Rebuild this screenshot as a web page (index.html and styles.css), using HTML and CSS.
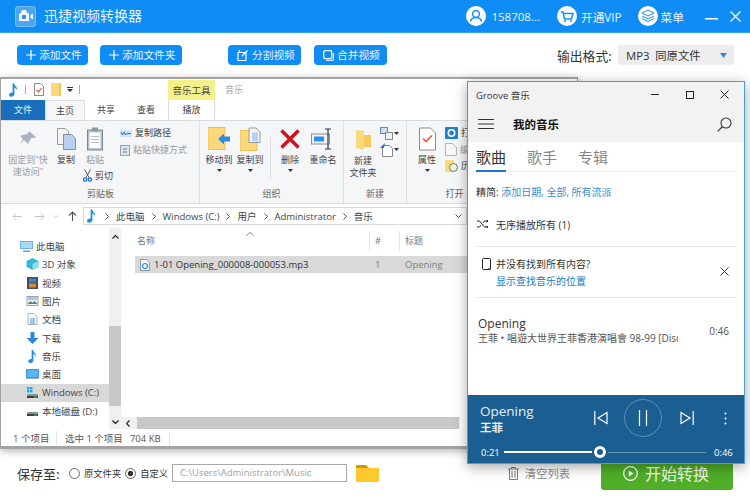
FILE: index.html
```html
<!DOCTYPE html>
<html lang="zh">
<head>
<meta charset="utf-8">
<title>迅捷视频转换器</title>
<link rel="stylesheet" href="styles.css">
</head>
<body>
<svg class="defs" width="0" height="0">
  <symbol id="note" viewBox="0 0 10 15"><path d="M4 0h1.600c.2 3 4.200 3.800 3.400 8-.4-2-1.800-3.200-3-3.400V12c0 1.800-1.700 3-3.500 3C1 15 0 14 0 12.800 0 11.200 1.800 10 4 10.300z" fill="#1d8fe8"/></symbol>
  <symbol id="chev" viewBox="0 0 4 7"><path d="M.5.500l3 3-3 3" fill="none" stroke="#555" stroke-width="1"/></symbol>
  <symbol id="drop" viewBox="0 0 5 3"><path d="M0 0h5L2.500 3z" fill="#333"/></symbol>
  <symbol id="drive" viewBox="0 0 13 12"><rect x="1" y="7" width="11" height="4" rx="1" fill="#8a8f92"/><rect x="1" y="9" width="11" height="2" fill="#3b3f42"/><rect x="8" y="9.500" width="3" height="1" fill="#54d15b"/></symbol>
</svg>

<div class="app">
  <header class="head">
    <div class="brand">
      <svg class="logo" width="21" height="21" viewBox="0 0 21 21"><rect width="21" height="21" rx="3" fill="#4aa6f1"/><rect x=".5" y=".5" width="20" height="20" rx="3" fill="none" stroke="#7cbff5"/><path d="M4 8l2-1 1-3h4l1 3h2v8H4z" fill="#fff"/><path d="M15.500 9l2.500-1.500v6L15.500 12z" fill="#eaf5fe"/><circle cx="9" cy="11" r="2.300" fill="#2f8fe0"/></svg>
      <span class="brand-name">迅捷视频转换器</span>
    </div>
    <div class="head-tools">
      <div class="head-item item-user">
        <svg width="20" height="20" viewBox="0 0 20 20"><circle cx="10" cy="10" r="10" fill="#fff"/><circle cx="10" cy="8" r="3.400" fill="none" stroke="#1b90f2" stroke-width="1.500"/><path d="M4.500 15.500c.6-3 3-4 5.500-4s4.900 1 5.500 4" fill="none" stroke="#1b90f2" stroke-width="1.500"/></svg>
        <span>158708...</span>
      </div>
      <div class="head-item">
        <svg width="20" height="20" viewBox="0 0 20 20"><circle cx="10" cy="10" r="10" fill="#fff"/><path d="M4 6h2l1.500 7h7L16 7.500H6.500" fill="none" stroke="#1b90f2" stroke-width="1.500"/><circle cx="8" cy="15" r="1" fill="#1b90f2"/><circle cx="14" cy="15" r="1" fill="#1b90f2"/></svg>
        <span>开通VIP</span>
      </div>
      <div class="head-item item-menu">
        <svg width="20" height="20" viewBox="0 0 20 20"><circle cx="10" cy="10" r="10" fill="#fff"/><path d="M10 4l6 3-6 3-6-3z" fill="none" stroke="#1b90f2"/><path d="M4 10l6 3 6-3M4 12.500l6 3 6-3" fill="none" stroke="#1b90f2"/></svg>
        <span>菜单</span>
      </div>
      <svg class="win-min" width="13" height="2" viewBox="0 0 13 2"><rect width="13" height="1.500" fill="#fff"/></svg>
      <svg class="win-close" width="11" height="11" viewBox="0 0 11 11"><path d="M.5.500l10 10M10.500.500l-10 10" stroke="#fff" stroke-width="1.300"/></svg>
    </div>
  </header>

  <div class="bar">
    <button class="btn btn-a"><svg width="10" height="10" viewBox="0 0 10 10"><path d="M5 0v10M0 5h10" stroke="#fff" stroke-width="1.200"/></svg>添加文件</button>
    <button class="btn btn-b"><svg width="10" height="10" viewBox="0 0 10 10"><path d="M5 0v10M0 5h10" stroke="#fff" stroke-width="1.200"/></svg>添加文件夹</button>
    <button class="btn btn-c"><svg width="11" height="11" viewBox="0 0 11 11"><path d="M1 2.500h8v8M1 2.500v8h8M2.500 0v2.500M10.500 .5L5 6" fill="none" stroke="#fff" stroke-width="1.200"/></svg>分割视频</button>
    <button class="btn btn-d"><svg width="11" height="11" viewBox="0 0 11 11"><rect x=".7" y=".7" width="8" height="8" rx="1.500" fill="none" stroke="#fff" stroke-width="1.300"/><path d="M10.300 3v7.300H3" fill="none" stroke="#fff"/></svg>合并视频</button>
    <label class="fmt-label">输出格式:</label>
    <div class="fmt"><span>MP3&nbsp; 同原文件</span><svg width="7" height="5" viewBox="0 0 7 5"><path d="M0 0h7L3.500 5z" fill="#1b90f2"/></svg></div>
  </div>

  <main class="desk">
    <section class="explorer">
      <div class="qat">
        <svg class="q-note" width="9" height="14"><use href="#note"/></svg>
        <i class="q-sep"></i>
        <svg class="q-doc" width="10" height="13" viewBox="0 0 10 13"><path d="M.5.500h6l3 3v9H.5z" fill="#fff" stroke="#8b8b8b"/><path d="M2.500 7l2 2 3-4" fill="none" stroke="#e8562a" stroke-width="1.200"/></svg>
        <svg class="q-folder" width="10" height="13" viewBox="0 0 10 13"><rect width="10" height="13" fill="#fbd87a"/><rect x="8" width="2" height="13" fill="#f2c45a"/></svg>
        <svg class="q-drop" width="6" height="5" viewBox="0 0 6 5"><path d="M0 0h6v1H0zM0 2h6L3 5z" fill="#333"/></svg>
        <i class="q-sep q-sep2"></i>
        <span class="ctx-tab">音乐工具</span>
        <span class="q-title">音乐</span>
      </div>
      <nav class="tabs">
        <span class="tab tab-file">文件</span>
        <span class="tab tab-on">主页</span>
        <span class="tab tab-share">共享</span>
        <span class="tab tab-view">查看</span>
        <span class="tab tab-play">播放</span>
      </nav>
      <div class="ribbon">
        <div class="group g1">
          <div class="group-body">
            <div class="big b-pin off">
              <svg width="18" height="18" viewBox="0 0 18 18"><path d="M10 1l7 6-2 1-3 0-2 4-1 2-4-4-4 5 3-6-3-3 3-1 4-1 2-2z" fill="#a9b4c4"/></svg>
              <span>固定到"快<br>速访问"</span>
            </div>
            <div class="big b-copy">
              <svg width="19" height="22" viewBox="0 0 19 22"><path d="M.5.500h8l3 3v13H.5z" fill="#f4f4f4" stroke="#9a9a9a"/><path d="M6.500 6.500h8l4 4v11h-12z" fill="#b8d0f2" stroke="#8a8f96"/></svg>
              <span>复制</span>
            </div>
            <div class="col-paste">
              <div class="big b-paste off">
                <svg width="16" height="23" viewBox="0 0 16 23"><rect x=".5" y="2.500" width="15" height="20" fill="#b9c3d0" stroke="#7d8794"/><rect x="2.500" y="5" width="11" height="15.500" fill="#fff"/><rect x="5" y="0" width="6" height="4" fill="#8d97a5"/><path d="M4 9h8M4 12h8M4 15h8" stroke="#bbb"/></svg>
                <span>粘贴</span>
              </div>
              <div class="mini cut">
                <svg width="9" height="13" viewBox="0 0 9 13"><path d="M1.500.500l4.500 8M7.500.500L3 8.500" stroke="#555" fill="none"/><circle cx="2.200" cy="10.500" r="1.700" fill="none" stroke="#1d6fc0" stroke-width="1.200"/><circle cx="6.800" cy="10.500" r="1.700" fill="none" stroke="#1d6fc0" stroke-width="1.200"/></svg>
                <span>剪切</span>
              </div>
            </div>
            <div class="col-small">
              <div class="mini">
                <svg width="12" height="7" viewBox="0 0 12 7"><rect width="12" height="7" fill="#cfe4f7"/><path d="M1 2l1.500 3L4 2l1.500 3L7 3.500h4" fill="none" stroke="#3a6ea5"/></svg>
                <span>复制路径</span>
              </div>
              <div class="mini off">
                <svg width="10" height="12" viewBox="0 0 10 12"><rect x=".5" y="1.500" width="9" height="10" fill="#dfe4ea" stroke="#97a2b0"/><path d="M3 5h4M3 8h4" stroke="#5e7fa8"/></svg>
                <span>粘贴快捷方式</span>
              </div>
            </div>
          </div>
          <div class="group-name">剪贴板</div>
        </div>

        <div class="group g2">
          <div class="group-body">
            <div class="big b-move">
              <svg width="22" height="23" viewBox="0 0 22 23"><rect y="0" width="17" height="22" fill="#fbd87a" stroke="#e9c25c"/><path d="M22 9h-6V6l-6 5.500 6 5.500v-3h6z" fill="#2a8fe0"/></svg>
              <span>移动到</span>
              <svg class="caret" width="5" height="3"><use href="#drop"/></svg>
            </div>
            <div class="big b-copyto">
              <svg width="21" height="23" viewBox="0 0 21 23"><rect y="3" width="17" height="20" fill="#fbd87a" stroke="#e9c25c"/><path d="M9 .500h7l4 4V15H9z" fill="#f4f4f4" stroke="#9a9a9a"/><rect x="12" y="5" width="6" height="9" fill="#b8d0f2"/></svg>
              <span>复制到</span>
              <svg class="caret" width="5" height="3"><use href="#drop"/></svg>
            </div>
            <i class="inner-sep"></i>
            <div class="big b-del">
              <svg width="20" height="20" viewBox="0 0 20 20"><path d="M1.500 1.500l17 17M18.500 1.500l-17 17" stroke="#d40f1c" stroke-width="3.400"/></svg>
              <span>删除</span>
              <svg class="caret" width="5" height="3"><use href="#drop"/></svg>
            </div>
            <div class="big b-ren">
              <svg width="24" height="21" viewBox="0 0 24 21"><rect x=".5" y="5.500" width="18" height="10" fill="#eef2f6" stroke="#8a9098"/><rect x="3" y="8" width="10" height="5" fill="#2a8fe0"/><path d="M14 .500h6M14 20.500h6M17 .500v20" stroke="#333" stroke-width="1.200" fill="none"/></svg>
              <span>重命名</span>
            </div>
          </div>
          <div class="group-name">组织</div>
        </div>

        <div class="group g3">
          <div class="group-body">
            <div class="big b-new">
              <svg width="15" height="20" viewBox="0 0 15 20"><path d="M0 0l8 1v4h7v12H8v3l-8-2z" fill="#fbd87a"/><path d="M8 5h7v12H8z" fill="#f6c95a"/></svg>
              <span>新建<br>文件夹</span>
            </div>
            <div class="col-icons">
              <div class="icon-row">
                <svg width="13" height="13" viewBox="0 0 13 13"><rect x=".5" y=".5" width="7" height="6" fill="#cfe0f5" stroke="#5b86b8"/><rect x="5.500" y="5.500" width="7" height="7" fill="#f2f2f2" stroke="#8a8a8a"/></svg>
                <svg width="5" height="3"><use href="#drop"/></svg>
              </div>
              <div class="icon-row">
                <svg width="13" height="14" viewBox="0 0 13 14"><path d="M2.500 2.500h7l3 3v8h-10z" fill="#fff" stroke="#8a8a8a"/><path d="M5 0L0 5h4z" fill="#2a78c8"/></svg>
                <svg width="5" height="3"><use href="#drop"/></svg>
              </div>
            </div>
          </div>
          <div class="group-name">新建</div>
        </div>

        <div class="group g4">
          <div class="group-body">
            <div class="big b-prop">
              <svg width="17" height="23" viewBox="0 0 17 23"><path d="M.5.500h11l5 5v17H.5z" fill="#fff" stroke="#8a8a8a"/><path d="M4 11l3 3 6-6" fill="none" stroke="#e8562a" stroke-width="1.600"/></svg>
              <span>属性</span>
              <svg class="caret" width="5" height="3"><use href="#drop"/></svg>
            </div>
            <div class="col-open">
              <div class="mini">
                <svg width="13" height="12" viewBox="0 0 13 12"><rect width="13" height="12" rx="1" fill="#1f7fd6"/><circle cx="6.500" cy="6" r="3.200" fill="none" stroke="#fff" stroke-width="1.600"/></svg>
                <span>打开</span>
              </div>
              <div class="mini off">
                <svg width="12" height="13" viewBox="0 0 12 13"><path d="M.5.500h7l4 4v8H.5z" fill="#f8f8f8" stroke="#aeb6c0"/></svg>
                <span>编辑</span>
              </div>
              <div class="mini">
                <svg width="13" height="12" viewBox="0 0 13 12"><rect width="9" height="12" fill="#fbd87a"/><circle cx="8.500" cy="7.500" r="4" fill="#eee" stroke="#5c8a3c"/></svg>
                <span>历史记录</span>
              </div>
            </div>
          </div>
          <div class="group-name">打开</div>
        </div>
      </div>

      <div class="navrow">
        <svg class="nav-back" width="10" height="9" viewBox="0 0 10 9"><path d="M10 4.500H1M4.500 1L1 4.500 4.500 8" fill="none" stroke="#c6c6c6"/></svg>
        <svg class="nav-fwd" width="10" height="9" viewBox="0 0 10 9"><path d="M0 4.500h9M5.500 1L9 4.500 5.500 8" fill="none" stroke="#c6c6c6"/></svg>
        <svg class="nav-dn" width="5" height="3" viewBox="0 0 5 3"><path d="M.3.300l2.200 2.200L4.700.300" fill="none" stroke="#c6c6c6"/></svg>
        <svg class="nav-up" width="9" height="10" viewBox="0 0 9 10"><path d="M4.500 10V1M1 4.500L4.500 1 8 4.500" fill="none" stroke="#555" stroke-width="1.100"/></svg>
        <div class="addr">
          <svg class="addr-note" width="9" height="14"><use href="#note"/></svg>
          <svg width="4" height="7"><use href="#chev"/></svg><span>此电脑</span>
          <svg width="4" height="7"><use href="#chev"/></svg><span>Windows (C:)</span>
          <svg width="4" height="7"><use href="#chev"/></svg><span>用户</span>
          <svg width="4" height="7"><use href="#chev"/></svg><span>Administrator</span>
          <svg width="4" height="7"><use href="#chev"/></svg><span>音乐</span>
          <svg class="addr-dn" width="7" height="4" viewBox="0 0 7 4"><path d="M.5.500l3 3 3-3" fill="none" stroke="#555"/></svg>
        </div>
      </div>

      <div class="panes">
        <ul class="tree">
          <li class="tree-pc"><svg width="13" height="11" viewBox="0 0 13 11"><rect width="13" height="8" fill="#64b5ee"/><rect x="1" y="1" width="11" height="6" fill="#a6d8f8"/><rect x="3" y="9.500" width="7" height="1.500" fill="#8a98a5"/></svg><span>此电脑</span></li>
          <li><svg width="12" height="12" viewBox="0 0 12 12"><path d="M6 0l6 3v6l-6 3-6-3V3z" fill="#35b8d6"/><path d="M6 6l6-3v6l-6 3z" fill="#8fe0ee"/></svg><span>3D 对象</span></li>
          <li><svg width="11" height="12" viewBox="0 0 11 12"><rect width="11" height="12" fill="#4b4b58"/><rect x="2" y="1.500" width="7" height="4" fill="#3c82c8"/><rect x="2" y="6.500" width="7" height="4" fill="#d88a2a"/></svg><span>视频</span></li>
          <li><svg width="12" height="10" viewBox="0 0 12 10"><rect x=".5" y=".5" width="11" height="9" fill="#eef3f7" stroke="#9aa4ae"/><path d="M1 8l3-3 2 2 2-2 3 3z" fill="#4e8a5c"/><rect x="1" y="1" width="10" height="3" fill="#a8c8e8"/></svg><span>图片</span></li>
          <li><svg width="10" height="12" viewBox="0 0 10 12"><path d="M.5.500h6l3 3v8H.5z" fill="#f7f9fb" stroke="#a6b0ba"/><path d="M2.500 6h5M2.500 8h5M2.500 10h5" stroke="#3f94dc"/></svg><span>文档</span></li>
          <li><svg width="12" height="12" viewBox="0 0 12 12"><path d="M4 0h4v6h4l-6 6-6-6h4z" fill="#2b88dc"/></svg><span>下载</span></li>
          <li><svg class="tree-note" width="9" height="13"><use href="#note"/></svg><span>音乐</span></li>
          <li><svg width="13" height="10" viewBox="0 0 13 10"><rect width="13" height="9" rx=".5" fill="#2f9ae8"/><rect x="1" y="1" width="11" height="7" fill="#5ab6f2"/><rect y="9" width="13" height="1" fill="#9ab"/></svg><span>桌面</span></li>
          <li class="tree-sel"><svg width="13" height="12"><use href="#drive"/><rect x="1" y="0" width="2.500" height="2.500" fill="#22a8e8"/><rect x="4" y="0" width="2.500" height="2.500" fill="#22a8e8"/><rect x="1" y="3" width="2.500" height="2.500" fill="#22a8e8"/><rect x="4" y="3" width="2.500" height="2.500" fill="#22a8e8"/></svg><span>Windows (C:)</span></li>
          <li><svg width="13" height="12"><use href="#drive"/></svg><span>本地磁盘 (D:)</span></li>
        </ul>
        <div class="vscroll">
          <svg class="arrow-up" width="7" height="4" viewBox="0 0 7 4"><path d="M.5 3.500l3-3 3 3" fill="none" stroke="#222" stroke-width="1.200"/></svg>
          <div class="vthumb"></div>
          <svg class="arrow-dn" width="7" height="4" viewBox="0 0 7 4"><path d="M.5.500l3 3 3-3" fill="none" stroke="#222" stroke-width="1.200"/></svg>
        </div>
        <div class="list">
          <div class="list-head">
            <div class="col col-name"><span>名称</span><svg class="sort" width="8" height="4" viewBox="0 0 8 4"><path d="M.5 3.500L4 .5l3.500 3" fill="none" stroke="#888"/></svg></div>
            <div class="col col-num">#</div>
            <div class="col col-title">标题</div>
          </div>
          <div class="file-row">
            <div class="cell-name"><svg width="10" height="12" viewBox="0 0 10 12"><path d="M.5.500h6l3 3v8H.5z" fill="#f4f8fc" stroke="#8a97a5"/><circle cx="5" cy="7" r="2.500" fill="none" stroke="#2a8fe0" stroke-width="1.200"/></svg><span>1-01 Opening_000008-000053.mp3</span></div>
            <div class="cell-num">1</div>
            <div class="cell-title">Opening</div>
          </div>
          <div class="hscroll">
            <svg width="4" height="7" viewBox="0 0 4 7"><path d="M3.500.500l-3 3 3 3" fill="none" stroke="#222" stroke-width="1.200"/></svg>
            <div class="hthumb"></div>
          </div>
        </div>
      </div>

      <div class="status">
        <span class="st-a">1 个项目</span>
        <span class="st-b">选中 1 个项目</span>
        <span class="st-c">704 KB</span>
      </div>
    </section>

    <section class="groove">
      <div class="g-top">
        <div class="g-title">
          <span class="g-app">Groove 音乐</span>
          <svg class="g-min" width="8" height="1" viewBox="0 0 8 1"><rect width="8" height="1" fill="#222"/></svg>
          <svg class="g-max" width="8" height="8" viewBox="0 0 8 8"><rect x=".5" y=".5" width="7" height="7" fill="none" stroke="#222"/></svg>
          <svg class="g-x" width="9" height="9" viewBox="0 0 9 9"><path d="M.5.500l8 8M8.500.500l-8 8" stroke="#222"/></svg>
        </div>
        <div class="g-head">
          <svg class="g-ham" width="16" height="10" viewBox="0 0 16 10"><path d="M0 .5h16M0 5h16M0 9.500h16" stroke="#333"/></svg>
          <span class="g-my">我的音乐</span>
          <svg class="g-search" width="15" height="15" viewBox="0 0 15 15"><circle cx="9" cy="6" r="5" fill="none" stroke="#333" stroke-width="1.100"/><path d="M5.500 9.500L.7 14.300" stroke="#333" stroke-width="1.200"/></svg>
        </div>
      </div>
      <div class="g-tabs">
        <span class="g-tab g-tab-on">歌曲</span>
        <span class="g-tab">歌手</span>
        <span class="g-tab">专辑</span>
      </div>
      <p class="g-filter"><span>精简:</span> <a>添加日期, 全部, 所有流派</a></p>
      <div class="g-shuffle">
        <svg width="11" height="8" viewBox="0 0 11 8"><path d="M0 1h2.500l5 6H11M0 7h2.500L4 5.200M6 2.800L7.500 1H11M9.500 0L11 1 9.500 2M9.500 6L11 7 9.500 8" fill="none" stroke="#222"/></svg>
        <span>无序播放所有 (1)</span>
      </div>
      <hr class="g-line g-line1">
      <div class="g-notice">
        <svg class="g-device" width="9" height="12" viewBox="0 0 9 12"><rect x=".5" y=".5" width="8" height="11" rx="1" fill="none" stroke="#222"/><path d="M6 11h3" stroke="#222"/></svg>
        <div class="g-notice-text">
          <div class="g-q">并没有找到所有内容?</div>
          <a class="g-link">显示查找音乐的位置</a>
        </div>
        <svg class="g-close" width="9" height="9" viewBox="0 0 9 9"><path d="M.5.500l8 8M8.500.500l-8 8" stroke="#333"/></svg>
      </div>
      <hr class="g-line g-line2">
      <div class="g-song">
        <div class="g-song-info">
          <div class="g-song-name">Opening</div>
          <div class="g-song-sub">王菲 • 唱遊大世界王菲香港演唱會 98-99 [Disc 1]</div>
        </div>
        <span class="g-song-time">0:46</span>
      </div>
      <div class="player">
        <div class="p-main">
          <div class="p-info">
            <div class="p-name">Opening</div>
            <div class="p-artist">王菲</div>
          </div>
          <svg class="p-prev" width="14" height="14" viewBox="0 0 14 14"><path d="M.8 0v14M13 1.500v11L4 7z" fill="none" stroke="#fff" stroke-width="1.200"/></svg>
          <div class="p-pause"><svg width="10" height="16" viewBox="0 0 10 16"><path d="M1.500 0v16M8.500 0v16" stroke="#fff" stroke-width="1.200"/></svg></div>
          <svg class="p-next" width="14" height="14" viewBox="0 0 14 14"><path d="M13.200 0v14M1 1.500v11L10 7z" fill="none" stroke="#fff" stroke-width="1.200"/></svg>
          <svg class="p-more" width="3" height="13" viewBox="0 0 3 13"><circle cx="1.500" cy="1.500" r="1" fill="#fff"/><circle cx="1.500" cy="6.500" r="1" fill="#fff"/><circle cx="1.500" cy="11.500" r="1" fill="#fff"/></svg>
        </div>
        <div class="p-progress">
          <span class="p-t1">0:21</span>
          <i class="p-fill"></i>
          <i class="p-knob"></i>
          <i class="p-rest"></i>
          <span class="p-t2">0:46</span>
        </div>
      </div>
    </section>
  </main>

  <footer class="foot">
    <span class="save-label">保存至:</span>
    <label class="radio"><i class="dot"></i>原文件夹</label>
    <label class="radio radio2"><i class="dot dot-on"></i>自定义</label>
    <div class="path-input">C:\Users\Administrator\Music</div>
    <svg class="folder" width="23" height="18" viewBox="0 0 23 18"><path d="M0 2a1 1 0 0 1 1-1h9l3 3H0z" fill="#c99a0e"/><rect y="4" width="23" height="14" fill="#fec92d"/></svg>
    <div class="clear">
      <svg width="11" height="13" viewBox="0 0 11 13"><path d="M0 2h11M3.500 2V.5h4V2M1.500 2v10.500h8V2M4 4v7M7 4v7" fill="none" stroke="#7a7a7a"/></svg>
      <span>清空列表</span>
    </div>
    <button class="start">
      <svg width="15" height="15" viewBox="0 0 15 15"><circle cx="7.500" cy="7.500" r="6.800" fill="none" stroke="#fff" stroke-width="1.200"/><path d="M5.800 4.500v6l4.700-3z" fill="#fff"/></svg>
      开始转换
    </button>
  </footer>
</div>
</body>
</html>
```

FILE: styles.css
```css
* { box-sizing: border-box; }
html, body { margin: 0; padding: 0; }
body {
  width: 750px; height: 497px; overflow: hidden; background: #fff;
  font-family: "Open Sans", "Noto Sans CJK SC", sans-serif; font-size: 9px; color: #444;
}
.defs { position: absolute; }
svg { display: block; flex: none; }
i { display: block; font-style: normal; }
.app { width: 750px; height: 497px; display: flex; flex-direction: column; }

/* header */
.head {
  height: 33px; flex: none; background: #108df4; border-bottom: 1px solid #37a2f7;
  display: flex; align-items: center; justify-content: space-between; color: #fff;
}
.brand { display: flex; align-items: center; margin-left: 15px; gap: 8px; }
.brand-name { font-size: 14px; line-height: 20px; color: #eaf5ff; }
.head-tools { display: flex; align-items: center; }
.head-item { display: flex; align-items: center; gap: 4px; font-size: 11.700px; margin-right: 16px; color: #e8f4ff; white-space: nowrap; }
.item-user { gap: 5px; margin-right: 17px; font-size: 11.500px; }
.item-menu { gap: 3px; margin-right: 21px; }
.win-min { margin-top: 6px; }
.win-close { margin: 0 9px 0 12px; }

/* toolbar */
.bar { height: 44px; flex: none; display: flex; align-items: center; padding: 0 16px 0 17px; }
.btn {
  height: 20px; border: 0; border-radius: 4px; background: #108df4; color: #e8f4ff;
  font: 10.700px/20px "Noto Sans CJK SC", sans-serif; display: flex; align-items: center; padding: 0; gap: 3px;
}
.btn-a { width: 71px; padding-left: 9px; }
.btn-b { width: 82px; padding-left: 9px; margin-left: 12px; }
.btn-c { width: 73px; padding-left: 9px; margin-left: 46px; gap: 4px; }
.btn-d { width: 73px; padding-left: 9px; margin-left: 13px; gap: 3px; }
.fmt-label { margin-left: 170px; width: 55px; font-size: 12.800px; color: #333; font-family: "Noto Sans CJK SC", sans-serif; white-space: nowrap; }
.fmt {
  width: 116px; height: 20px; margin-left: 6px; background: #ededed; padding: 0 7px 0 8px;
  display: flex; align-items: center; justify-content: space-between; font-size: 11.300px; color: #333;
}

/* free canvas with the two windows */
.desk { flex: none; height: 372px; position: relative; z-index: 2; }
.explorer {
  position: absolute; left: 0; top: 0; width: 578px; height: 372px; background: #fff;
  border-top: 2px solid #a3a3a3; border-left: 1px solid #a3a3a3; border-bottom: 3px solid #a3a3a3; border-right: 1px solid #a3a3a3;
  box-shadow: 0 2px 8px rgba(0,0,0,.3); display: flex; flex-direction: column; overflow: hidden;
}
.qat { height: 21px; flex: none; display: flex; align-items: center; }
.q-note { margin-left: 8px; }
.q-sep { width: 1px; height: 9px; background: #aaa; margin-left: 7px; }
.q-doc { margin-left: 8px; }
.q-folder { margin-left: 7px; }
.q-drop { margin-left: 6px; }
.q-sep2 { margin-left: 6px; }
.ctx-tab {
  margin-left: 88px; width: 47px; height: 20px; margin-top: 1px; background: #f4f08a; color: #444;
  text-align: center; line-height: 20px; font-size: 9.500px; font-family: "Noto Sans CJK SC", sans-serif;
}
.q-title { margin-left: 10px; color: #a6a6a6; font-size: 9px; }

.tabs { height: 20px; flex: none; display: flex; position: relative; z-index: 1; }
.tab { line-height: 19px; height: 20px; text-align: center; color: #444; font-size: 9px; }
.tab-file { width: 44px; background: #1a6fbd; color: #e4effa; }
.tab-on { width: 40px; background: #f5f6f7; border: 1px solid #dadbdc; border-bottom: 0; }
.tab-share { margin-left: 11px; width: 20px; }
.tab-view { margin-left: 20px; width: 20px; }
.tab-play { margin-left: 12px; width: 47px; border-left: 1px solid #dadbdc; border-right: 1px solid #dadbdc; }

.ribbon {
  height: 84px; flex: none; background: #f5f6f7; display: flex; padding-left: 1px;
  border-top: 1px solid #dadbdc; border-bottom: 1px solid #dadbdc;
}
.group { display: flex; flex-direction: column; border-right: 1px solid #dfe0e2; }
.g1 { width: 198px; }
.g2 { width: 144px; }
.g3 { width: 63px; }
.g4 { width: 96px; }
.group-body { height: 67px; display: flex; padding-top: 6px; position: relative; }
.group-name { height: 14px; line-height: 12px; text-align: center; color: #666; font-size: 9px; }
.big { display: flex; flex-direction: column; align-items: center; text-align: center; line-height: 12px; }
.big > svg:first-child { height: 24px; margin-bottom: 3px; }
.big span { display: block; white-space: nowrap; }
.off { color: #9a9a9a; }
.caret { margin-top: 3px; }
.b-pin { width: 46px; margin-left: 3px; }
.b-copy { width: 24px; margin-left: 3px; }
.col-paste { width: 38px; margin-left: 3px; display: flex; flex-direction: column; }
.b-paste { width: 28px; }
.cut { margin: 3px 0 0 2px; }
.col-small { display: flex; flex-direction: column; gap: 5px; margin-left: 1px; }
.mini { display: flex; align-items: center; gap: 3px; line-height: 12px; white-space: nowrap; }
.b-move { width: 28px; margin-left: 5px; }
.b-copyto { width: 28px; margin-left: 3px; }
.inner-sep { width: 1px; height: 42px; background: #e0e1e3; margin: 10px 0 0 6px; }
.b-del { width: 24px; margin-left: 7px; }
.b-ren { width: 28px; margin-left: 7px; }
.b-new { width: 30px; margin-left: 4px; }
.b-new > svg:first-child { margin-top: 1px; height: 24px; }
.col-icons { display: flex; flex-direction: column; gap: 3px; margin-left: 2px; }
.icon-row { display: flex; align-items: center; gap: 1px; height: 13px; }
.b-prop { width: 24px; margin-left: 8px; }
.col-open { margin-left: 6px; display: flex; flex-direction: column; gap: 4px; }

.navrow { height: 24px; flex: none; display: flex; align-items: center; background: #fff; }
.nav-back { margin-left: 11px; }
.nav-fwd { margin-left: 13px; }
.nav-dn { margin-left: 8px; }
.nav-up { margin-left: 10px; }
.addr {
  width: 384px; height: 18px; margin-left: 6px; border: 1px solid #d9d9d9; display: flex; align-items: center;
  font-size: 9.500px; gap: 7px; padding-left: 3px; color: #444;
}
.addr-note { margin-right: 2px; }
.addr-dn { margin-left: auto; margin-right: 4px; }

.panes { height: 202px; flex: none; display: flex; }
.tree { list-style: none; margin: 0; padding: 9px 0 0; width: 108px; flex: none; }
.tree li {
  height: 18.330px; display: flex; align-items: center; padding-left: 25px; gap: 3px; color: #444; font-size: 9.500px; white-space: nowrap;
}
.tree li svg { width: 13px; }
.tree .tree-pc { padding-left: 19px; }
.tree-sel { background: #d9d9d9; }
.vscroll { width: 12px; flex: none; background: #f0f0f0; display: flex; flex-direction: column; align-items: center; height: 201px; }
.arrow-up { margin-top: 7px; }
.vthumb { width: 100%; height: 80px; margin-top: 87px; background: #c8c8c8; }
.arrow-dn { margin-top: 14px; }
.list { flex: none; width: 457px; display: flex; flex-direction: column; }
.list-head { height: 27px; display: flex; align-items: stretch; padding-left: 16px; flex: none; }
.col { color: #6b7a8c; line-height: 26px; font-size: 9px; }
.col-name { width: 232px; display: flex; }
.sort { margin: 4px 0 0 91px; }
.col-num, .col-title { border-left: 1px solid #e5e5e5; height: 20px; margin-top: 3px; line-height: 20px; padding-left: 5px; }
.col-num { width: 30px; }
.col-title { width: 60px; }
.file-row { height: 17px; margin: 1px 0 0 14px; background: #d9d9d9; display: flex; align-items: center; width: 400px; flex: none; color: #333; font-size: 9.500px; }
.cell-name { width: 234px; display: flex; align-items: center; gap: 4px; padding-left: 5px; white-space: nowrap; }
.cell-num { width: 30px; padding-left: 6px; color: #777; }
.cell-title { color: #808080; padding-left: 6px; }
.hscroll { margin: auto 0 1px 0; height: 12px; width: 339px; background: #f0f0f0; display: flex; align-items: center; padding-left: 5px; flex: none; }
.hthumb { width: 322px; height: 12px; margin-left: 7px; background: #c8c8c8; }

.status { height: 16px; flex: none; display: flex; align-items: center; font-size: 9.500px; color: #555; padding-left: 12px; }
.st-a { width: 43px; }
.st-b { padding-left: 8px; border-left: 1px solid #e5e5e5; }
.st-c { margin-left: 7px; padding-right: 8px; border-right: 1px solid #e5e5e5; }

/* groove */
.groove {
  position: absolute; left: 467px; top: 4px; width: 278px; height: 383px; background: #fff;
  border: 1px solid #4a9bd8; box-shadow: 0 3px 12px rgba(0,0,0,.35); display: flex; flex-direction: column; color: #333;
}
.g-top { background: #f2f2f2; height: 60px; flex: none; }
.g-title { height: 27px; display: flex; align-items: center; padding: 0 0 2px 8px; }
.g-app { font-size: 9.500px; color: #333; width: 175px; }
.g-max { margin-left: 27px; }
.g-x { margin-left: 26px; }
.g-head { height: 33px; display: flex; align-items: center; padding: 0 12px 3px 10px; }
.g-my { margin-left: 19px; font-weight: 700; font-size: 11.500px; color: #111; }
.g-search { margin-left: auto; }
.g-tabs { height: 30px; margin: 0 9px 0 8px; display: flex; gap: 21px; border-bottom: 1px solid #eee; flex: none; }
.g-tab { font-size: 15px; line-height: 22px; height: 30px; padding-top: 4px; color: #888; }
.g-tab-on { color: #333; border-bottom: 2px solid #1a78d2; }
.g-filter { margin: 12px 0 0 8px; line-height: 16px; font-size: 10px; color: #333; }
.g-filter a { color: #3e8ccb; }
.g-shuffle { margin: 16px 0 0 9px; height: 16px; display: flex; align-items: center; gap: 8px; font-size: 10px; }
.g-line { margin: 0 9px 0 9px; height: 1px; border: 0; background: #e6e6e6; flex: none; }
.g-line1 { margin-top: 14px; }
.g-notice { margin-top: 9px; display: flex; padding-left: 14px; height: 33px; position: relative; font-size: 10px; line-height: 16px; }
.g-device { margin-top: 2px; }
.g-notice-text { margin-left: 5px; }
.g-q { height: 17px; }
.g-link { color: #1478c4; }
.g-close { margin: 11px 15px 0 auto; }
.g-line2 { margin-top: 8px; }
.g-song { margin: 18px 0 0 10px; display: flex; align-items: center; padding-right: 15px; }
.g-song-info { width: 200px; overflow: hidden; white-space: nowrap; }
.g-song-name { font-size: 12px; line-height: 15px; color: #333; }
.g-song-sub { font-size: 10px; line-height: 15px; color: #555; }
.g-song-time { margin-left: auto; font-size: 10px; color: #555; }

.player { margin-top: auto; height: 68px; background: #1a5e92; color: #fff; flex: none; display: flex; flex-direction: column; }
.p-main { height: 46px; display: flex; align-items: center; padding-left: 12px; }
.p-info { width: 114px; padding-top: 2px; }
.p-name { font-size: 13.500px; line-height: 18px; color: #e6eef5; }
.p-artist { font-size: 11.500px; line-height: 16px; font-weight: 700; color: #eaf1f7; }
.p-pause { width: 38px; height: 38px; border: 1px solid #5f90b6; border-radius: 50%; margin-left: 16px; display: flex; align-items: center; justify-content: center; flex: none; }
.p-next { margin-left: 18px; }
.p-more { margin-left: 30px; }
.p-progress { height: 22px; display: flex; align-items: center; padding-left: 13px; font-size: 9.500px; }
.p-t1 { width: 23px; }
.p-fill { width: 88px; height: 2px; background: #fff; }
.p-knob { width: 12px; height: 12px; border-radius: 50%; border: 3px solid #fff; margin-left: 2px; background: #1a5e92; }
.p-rest { width: 98px; height: 1px; background: #6d99bb; margin-left: 2px; }
.p-t2 { margin-left: 8px; }

/* footer */
.foot { height: 48px; flex: none; display: flex; align-items: center; padding: 0 17px; position: relative; z-index: 1; }
.save-label { font-size: 13px; color: #333; width: 52px; font-family: "Noto Sans CJK SC", sans-serif; }
.radio { display: flex; align-items: center; gap: 4px; font-size: 9.300px; color: #333; }
.radio2 { margin-left: 4px; }
.dot { width: 11px; height: 11px; border-radius: 50%; border: 1px solid #666; background: #fff; }
.dot-on { background: radial-gradient(circle, #333 0 2.500px, #fff 3px); }
.path-input {
  width: 175px; height: 18px; margin-left: 4px; border: 1px solid #a8a8a8; padding-left: 7px; line-height: 16px;
  font-size: 9.500px; color: #a0a0a0; white-space: nowrap;
}
.folder { margin-left: 9px; }
.clear { margin-left: auto; display: flex; align-items: center; gap: 6px; font-size: 11.300px; color: #8a8a8a; }
.start {
  width: 132px; height: 34px; margin-left: 31px; border: 0; border-radius: 3px; background: #50ae29; color: #eef8e8;
  font: 16px/34px "Noto Sans CJK SC", sans-serif; display: flex; align-items: center; padding: 0 0 0 22px; gap: 7px;
}
```
